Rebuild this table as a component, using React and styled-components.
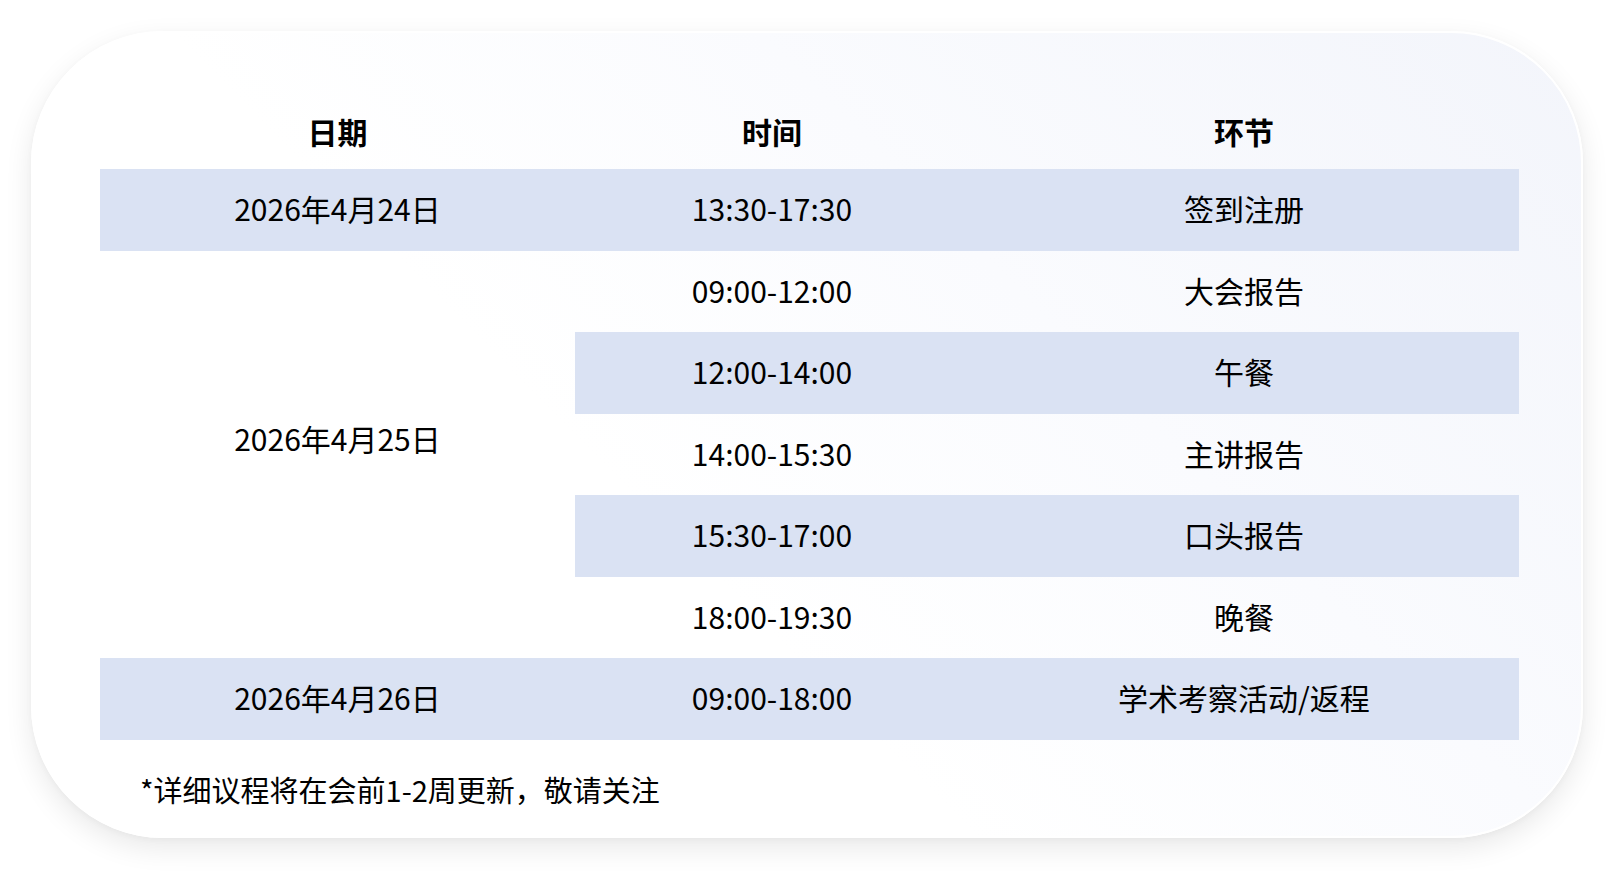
import React from 'react'
import styled, { createGlobalStyle } from 'styled-components'

const GlobalStyle = createGlobalStyle`
  html, body {
    margin: 0;
    padding: 0;
    background: #ffffff;
  }
  body {
    font-family: "Noto Sans CJK SC", "Noto Sans", sans-serif;
    color: #000;
  }
`

const schedule = [
  { date: '2026年4月24日', span: 1, time: '13:30-17:30', item: '签到注册', shade: true },
  { date: '2026年4月25日', span: 5, time: '09:00-12:00', item: '大会报告', shade: false },
  { time: '12:00-14:00', item: '午餐', shade: true },
  { time: '14:00-15:30', item: '主讲报告', shade: false },
  { time: '15:30-17:00', item: '口头报告', shade: true },
  { time: '18:00-19:30', item: '晚餐', shade: false },
  { date: '2026年4月26日', span: 1, time: '09:00-18:00', item: '学术考察活动/返程', shade: true },
]

export default function App() {
  return (
    <Page>
      <GlobalStyle />
      <Card>
        <Table>
          <colgroup>
            <col style={{ width: 475 }} />
            <col style={{ width: 394 }} />
            <col />
          </colgroup>
          <thead>
            <tr>
              <HeadCell>日期</HeadCell>
              <HeadCell>时间</HeadCell>
              <HeadCell>环节</HeadCell>
            </tr>
          </thead>
          <tbody>
            {schedule.map((row, i) => (
              <tr key={i}>
                {row.date &&
                  (row.span > 1 ? (
                    <SpanCell rowSpan={row.span}>{row.date}</SpanCell>
                  ) : (
                    <Cell $shade={row.shade}>{row.date}</Cell>
                  ))}
                <Cell $shade={row.shade}>{row.time}</Cell>
                <Cell $shade={row.shade}>{row.item}</Cell>
              </tr>
            ))}
          </tbody>
        </Table>
        <Note>*详细议程将在会前1-2周更新，敬请关注</Note>
      </Card>
    </Page>
  )
}

const Page = styled.div`
  padding: 31px 0 0 31px;
  min-height: 100vh;
  box-sizing: border-box;
`

const Card = styled.div`
  width: 1552px;
  height: 807px;
  box-sizing: border-box;
  padding: 64px 64px 0 67px;
  border-radius: 132px;
  border: 2px solid #ffffff;
  background: linear-gradient(225deg, #f3f5fb 0%, #fafbfe 35%, #ffffff 60%);
  box-shadow: 0 10px 28px rgba(0, 0, 0, 0.09), 0 2px 6px rgba(0, 0, 0, 0.03);
`

const Table = styled.table`
  width: 1419px;
  border-collapse: collapse;
  table-layout: fixed;
`

const HeadCell = styled.th`
  height: 68px;
  padding: 0 0 4px;
  font-size: 30px;
  font-weight: 700;
  text-align: center;
  vertical-align: middle;
`

const Cell = styled.td`
  height: 78.5px;
  padding: 0 0 3px;
  font-size: 30px;
  font-weight: 400;
  text-align: center;
  vertical-align: middle;
  background: ${p => (p.$shade ? '#dae2f3' : 'transparent')};
`

const SpanCell = styled.td`
  padding: 166px 0 0;
  font-size: 30px;
  line-height: 42px;
  text-align: center;
  vertical-align: top;
`

const Note = styled.div`
  margin-top: 32px;
  padding-left: 40px;
  font-size: 29px;
  line-height: 34px;
`
